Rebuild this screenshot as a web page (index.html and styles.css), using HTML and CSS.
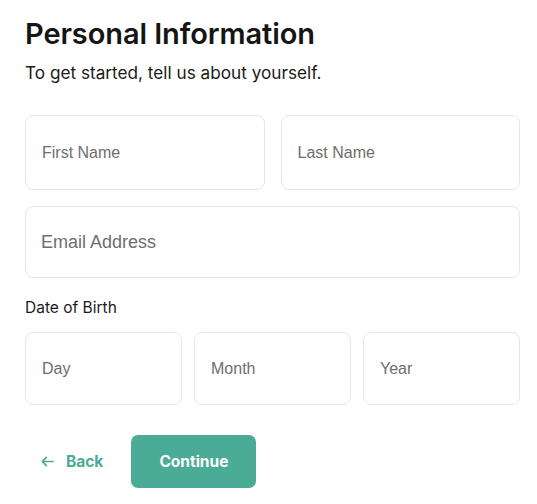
FILE: index.html
```html
<!DOCTYPE html>
<html lang="en">
<head>
<meta charset="utf-8">
<title>Personal Information</title>
<link rel="stylesheet" href="styles.css">
</head>
<body>
<main class="page">
  <h1 class="title">Personal Information</h1>
  <p class="subtitle">To get started, tell us about yourself.</p>

  <form class="form">
    <div class="row row-names">
      <input class="field" type="text" placeholder="First Name">
      <input class="field" type="text" placeholder="Last Name">
    </div>
    <input class="field field-email" type="email" placeholder="Email Address">

    <div class="dob-label">Date of Birth</div>
    <div class="row row-dob">
      <input class="field field-dob" type="text" placeholder="Day">
      <input class="field field-dob" type="text" placeholder="Month">
      <input class="field field-dob" type="text" placeholder="Year">
    </div>

    <div class="actions">
      <button type="button" class="btn-back">
        <svg class="back-arrow" width="13" height="11" viewBox="0 0 13 11" aria-hidden="true">
          <path d="M12 5.5H1.3M5.3 1.4L1.3 5.5L5.3 9.6" fill="none" stroke="currentColor" stroke-width="1.7" stroke-linecap="round" stroke-linejoin="round"/>
        </svg>
        <span>Back</span>
      </button>
      <button type="button" class="btn-continue">Continue</button>
    </div>
  </form>
</main>
</body>
</html>
```

FILE: styles.css
```css
* { box-sizing: border-box; }

html, body {
  margin: 0;
  padding: 0;
  background: #ffffff;
}

.page {
  padding: 16px 17px 0 25px;
  font-family: Inter, "Liberation Sans", sans-serif;
  color: #1a1a1a;
}

.title {
  margin: 0;
  font-size: 29px;
  line-height: 36px;
  font-weight: 600;
  letter-spacing: -0.1px;
  color: #151515;
}

.subtitle {
  margin: 9px 0 0;
  font-size: 17.2px;
  line-height: 24px;
  font-weight: 400;
  color: #1a1a1a;
}

.form {
  margin-top: 30px;
  display: flex;
  flex-direction: column;
}

.row {
  display: flex;
}

.row-names {
  gap: 16px;
}

.row-dob {
  gap: 12px;
  margin-top: 14px;
}

.field {
  flex: 1 1 0;
  min-width: 0;
  height: 75px;
  border: 1px solid #e6e6e6;
  border-radius: 8px;
  padding: 0 16px;
  font-family: "Liberation Sans", Arial, sans-serif;
  font-size: 16px;
  color: #1a1a1a;
  background: #fff;
  outline: none;
}

.field::placeholder {
  color: #6e6e6e;
  opacity: 1;
}

.field-email {
  flex: none;
  width: 100%;
  margin-top: 16px;
  height: 72px;
  font-size: 18px;
  padding: 0 15px;
}

.field-dob {
  height: 73px;
}

.dob-label {
  margin-top: 20px;
  font-size: 15.5px;
  line-height: 20px;
  color: #1a1a1a;
}

.actions {
  margin-top: 30px;
  display: flex;
  align-items: center;
  gap: 12px;
}

.btn-back {
  display: flex;
  align-items: center;
  gap: 12px;
  height: 53px;
  padding: 0 16px;
  border: none;
  background: transparent;
  color: #4aab96;
  font-family: Inter, "Liberation Sans", sans-serif;
  font-size: 15.5px;
  font-weight: 700;
  cursor: pointer;
}

.back-arrow {
  display: block;
}

.btn-continue {
  height: 53px;
  padding: 0 28px;
  border: none;
  border-radius: 7px;
  background: #4aab96;
  color: #ffffff;
  font-family: Inter, "Liberation Sans", sans-serif;
  font-size: 15.5px;
  font-weight: 700;
  cursor: pointer;
}
```
